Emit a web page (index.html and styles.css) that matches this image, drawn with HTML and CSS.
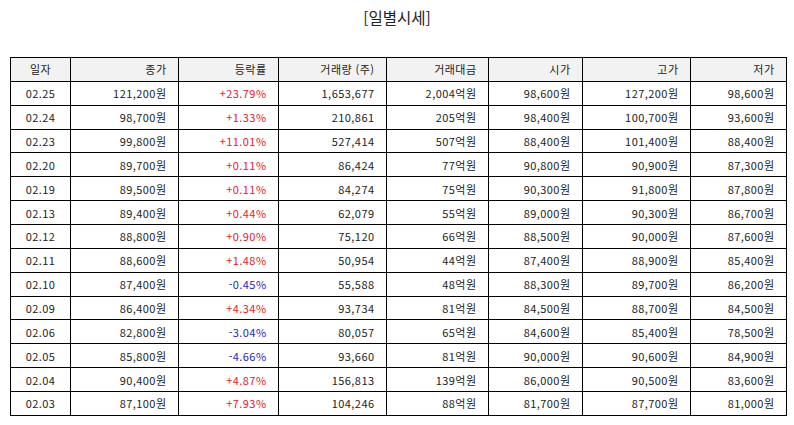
FILE: index.html
```html
<!DOCTYPE html>
<html lang="ko">
<head>
<meta charset="utf-8">
<title>일별시세</title>
<link rel="stylesheet" href="styles.css">
</head>
<body>
<div class="page">
  <h1 class="title">[일별시세]</h1>
  <table class="quotes">
    <colgroup>
      <col class="c-date"><col class="c-close"><col class="c-rate"><col class="c-vol">
      <col class="c-amt"><col class="c-open"><col class="c-high"><col class="c-low">
    </colgroup>
    <thead>
      <tr><th class="center">일자</th><th>종가</th><th>등락률</th><th>거래량 (주)</th><th>거래대금</th><th>시가</th><th>고가</th><th>저가</th></tr>
    </thead>
    <tbody>
      <tr><td class="center">02.25</td><td>121,200원</td><td class="up">+23.79%</td><td>1,653,677</td><td>2,004억원</td><td>98,600원</td><td>127,200원</td><td>98,600원</td></tr>
      <tr><td class="center">02.24</td><td>98,700원</td><td class="up">+1.33%</td><td>210,861</td><td>205억원</td><td>98,400원</td><td>100,700원</td><td>93,600원</td></tr>
      <tr><td class="center">02.23</td><td>99,800원</td><td class="up">+11.01%</td><td>527,414</td><td>507억원</td><td>88,400원</td><td>101,400원</td><td>88,400원</td></tr>
      <tr><td class="center">02.20</td><td>89,700원</td><td class="up">+0.11%</td><td>86,424</td><td>77억원</td><td>90,800원</td><td>90,900원</td><td>87,300원</td></tr>
      <tr><td class="center">02.19</td><td>89,500원</td><td class="up">+0.11%</td><td>84,274</td><td>75억원</td><td>90,300원</td><td>91,800원</td><td>87,800원</td></tr>
      <tr><td class="center">02.13</td><td>89,400원</td><td class="up">+0.44%</td><td>62,079</td><td>55억원</td><td>89,000원</td><td>90,300원</td><td>86,700원</td></tr>
      <tr><td class="center">02.12</td><td>88,800원</td><td class="up">+0.90%</td><td>75,120</td><td>66억원</td><td>88,500원</td><td>90,000원</td><td>87,600원</td></tr>
      <tr><td class="center">02.11</td><td>88,600원</td><td class="up">+1.48%</td><td>50,954</td><td>44억원</td><td>87,400원</td><td>88,900원</td><td>85,400원</td></tr>
      <tr><td class="center">02.10</td><td>87,400원</td><td class="down">-0.45%</td><td>55,588</td><td>48억원</td><td>88,300원</td><td>89,700원</td><td>86,200원</td></tr>
      <tr><td class="center">02.09</td><td>86,400원</td><td class="up">+4.34%</td><td>93,734</td><td>81억원</td><td>84,500원</td><td>88,700원</td><td>84,500원</td></tr>
      <tr><td class="center">02.06</td><td>82,800원</td><td class="down">-3.04%</td><td>80,057</td><td>65억원</td><td>84,600원</td><td>85,400원</td><td>78,500원</td></tr>
      <tr><td class="center">02.05</td><td>85,800원</td><td class="down">-4.66%</td><td>93,660</td><td>81억원</td><td>90,000원</td><td>90,600원</td><td>84,900원</td></tr>
      <tr><td class="center">02.04</td><td>90,400원</td><td class="up">+4.87%</td><td>156,813</td><td>139억원</td><td>86,000원</td><td>90,500원</td><td>83,600원</td></tr>
      <tr><td class="center">02.03</td><td>87,100원</td><td class="up">+7.93%</td><td>104,246</td><td>88억원</td><td>81,700원</td><td>87,700원</td><td>81,000원</td></tr>
    </tbody>
  </table>
</div>
</body>
</html>
```

FILE: styles.css
```css
html, body {
  margin: 0;
  padding: 0;
  background: #ffffff;
}

.page {
  padding: 7px 8px 0 10px;
  font-family: "Noto Sans CJK KR", "Noto Sans", sans-serif;
  color: #222222;
}

.title {
  margin: 0 0 30px 0;
  font-size: 15.5px;
  line-height: 20px;
  font-weight: 400;
  text-align: center;
  color: #222222;
  padding-right: 2px;
}

.quotes {
  width: 776px;
  border-collapse: collapse;
  table-layout: fixed;
  font-size: 11px;
  letter-spacing: 0.45px;
}

.c-date { width: 60px; }
.c-close { width: 108px; }
.c-rate { width: 100px; }
.c-vol { width: 108px; }
.c-amt { width: 102px; }
.c-open { width: 94px; }
.c-high { width: 108px; }
.c-low { width: 96px; }

.quotes th,
.quotes td {
  border: 1px solid #000000;
  height: 22.87px;
  padding: 0 11.5px 0 4px;
  text-align: right;
  font-weight: 400;
  line-height: 14px;
  white-space: nowrap;
  vertical-align: middle;
}

.quotes th {
  background: #f2f2f2;
}

.quotes .center {
  text-align: center;
  padding: 0;
}

.quotes .up {
  color: #e8202a;
}

.quotes .down {
  color: #2323d0;
}
```
